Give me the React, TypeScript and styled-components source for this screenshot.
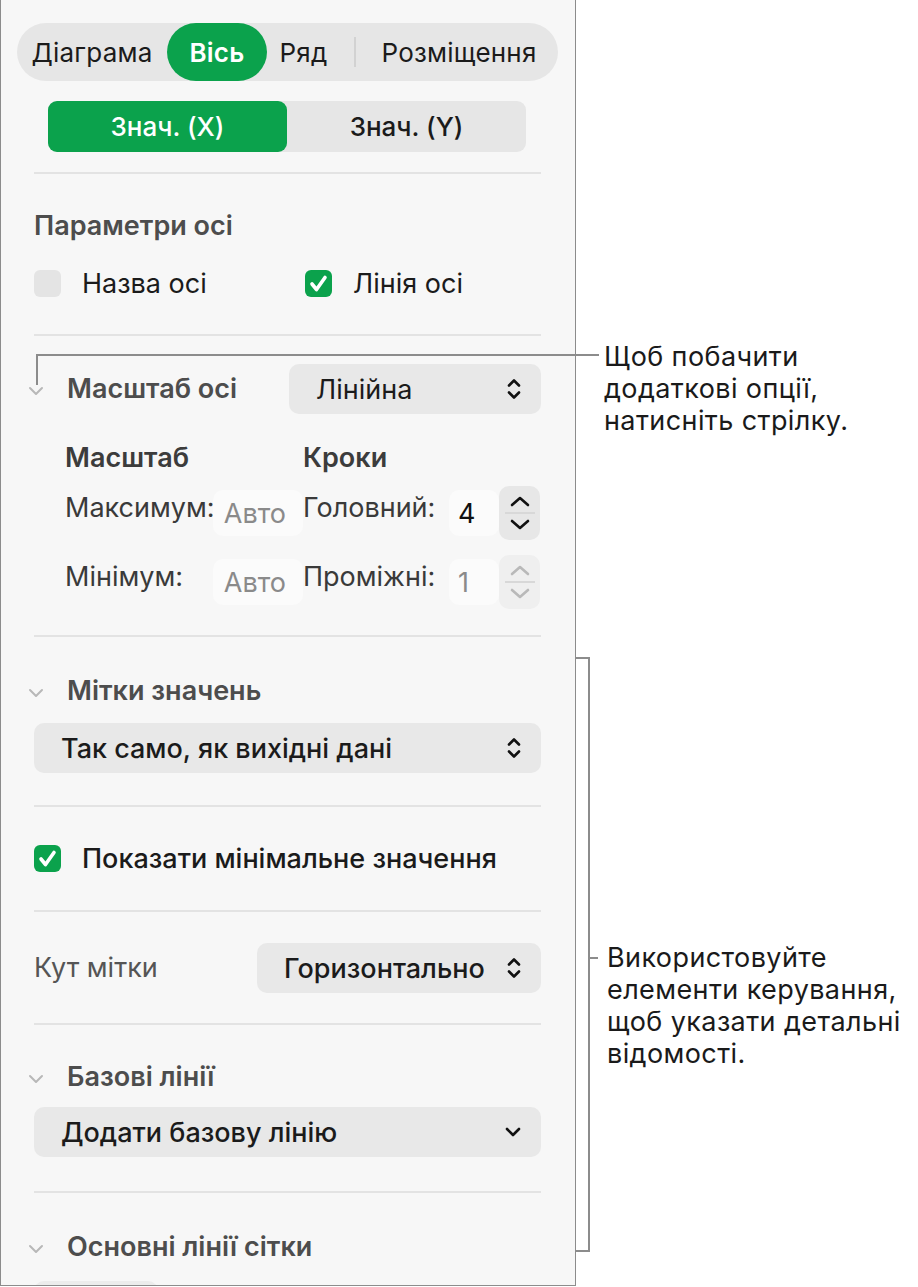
import React from 'react';
import styled, { createGlobalStyle } from 'styled-components';

const GREEN = '#0ba24c';
const LINE = '#8c8c8c';

const GlobalStyle = createGlobalStyle`
  html, body { margin: 0; padding: 0; background: #ffffff; }
  body {
    font-family: Inter, "Noto Sans", "Liberation Sans", sans-serif;
    -webkit-font-smoothing: antialiased;
  }
`;

const Figure = styled.div`
    position: relative;
    display: flex;
    align-items: flex-start;
    width: 918px;
    height: 1287px;
    overflow: hidden;
`;

const Panel = styled.aside`
    box-sizing: border-box;
    width: 576px;
    height: 1286px;
    flex-shrink: 0;
    padding: 23px 34px 0 33px;
    background: #f7f7f7;
    border: 1px solid ${LINE};
    border-top: none;
    overflow: hidden;
    display: flex;
    flex-direction: column;

    & > * {
        flex-shrink: 0;
    }
`;

const TabBar = styled.div`
    display: flex;
    align-items: center;
    height: 58px;
    margin: 0 -17px;
    background: #e6e6e6;
    border-radius: 29px;
`;

const Tab = styled.div<{ $w: number; $active?: boolean }>`
    width: ${(p) => p.$w}px;
    height: 58px;
    display: flex;
    align-items: center;
    justify-content: center;
    border-radius: 29px;
    font-size: 26px;
    letter-spacing: 0.2px;
    font-weight: ${(p) => (p.$active ? 600 : 400)};
    color: ${(p) => (p.$active ? '#ffffff' : '#1b1b1b')};
    background: ${(p) => (p.$active ? GREEN : 'transparent')};
`;

const TabSep = styled.div`
    width: 2px;
    height: 30px;
    margin: 0 14px;
    background: #d2d2d2;
`;

const Segmented = styled.div`
    display: grid;
    grid-template-columns: 1fr 1fr;
    height: 51px;
    margin: 20px 15px 0 14px;
    background: #e6e6e6;
    border-radius: 9px;
`;

const Segment = styled.div<{ $active?: boolean }>`
    display: flex;
    align-items: center;
    justify-content: center;
    border-radius: 9px;
    font-size: 26px;
    font-weight: 500;
    color: ${(p) => (p.$active ? '#ffffff' : '#1b1b1b')};
    background: ${(p) => (p.$active ? GREEN : 'transparent')};
`;

const Divider = styled.div<{ $mt: number }>`
    height: 2px;
    margin-top: ${(p) => p.$mt}px;
    background: #e3e3e3;
`;

const SectionTitle = styled.div<{ $mt: number }>`
    margin-top: ${(p) => p.$mt}px;
    font-size: 27px;
    line-height: 28px;
    font-weight: 600;
    color: #4d4d4d;
`;

const CheckRow = styled.div<{ $mt: number }>`
    display: flex;
    align-items: center;
    height: 27px;
    margin-top: ${(p) => p.$mt}px;
`;

const CheckItem = styled.label<{ $w?: number }>`
    display: flex;
    align-items: center;
    gap: 21px;
    width: ${(p) => (p.$w ? `${p.$w}px` : 'auto')};
`;

const Box = styled.span<{ $on?: boolean }>`
    width: 27px;
    height: 27px;
    border-radius: 6px;
    background: ${(p) => (p.$on ? GREEN : '#e4e4e4')};
    display: flex;
    align-items: center;
    justify-content: center;
    flex-shrink: 0;
`;

const Label = styled.span<{ $weight?: number; $color?: string }>`
    font-size: 27px;
    line-height: 28px;
    font-weight: ${(p) => p.$weight ?? 400};
    color: ${(p) => p.$color ?? '#1b1b1b'};
    white-space: nowrap;
`;

const HeaderRow = styled.div<{ $mt: number }>`
    display: flex;
    align-items: center;
    justify-content: space-between;
    margin-top: ${(p) => p.$mt}px;
`;

const Disclosure = styled.div`
    display: flex;
    align-items: center;
    margin-left: -6px;
`;

const ChevronSlot = styled.span`
    width: 39px;
    display: flex;
    align-items: center;
    padding-top: 4px;
`;

const Popup = styled.div<{ $w?: number; $mt?: number }>`
    box-sizing: border-box;
    width: ${(p) => (p.$w ? `${p.$w}px` : '100%')};
    height: 50px;
    margin-top: ${(p) => p.$mt ?? 0}px;
    padding: 0 19px 0 27px;
    display: flex;
    align-items: center;
    justify-content: space-between;
    background: #e8e8e8;
    border-radius: 10px;
    flex-shrink: 0;
`;

const PopupText = styled.span<{ $weight?: number }>`
    font-size: 27px;
    font-weight: ${(p) => p.$weight ?? 500};
    color: #1b1b1b;
    white-space: nowrap;
`;

const ScaleGrid = styled.div`
    display: grid;
    grid-template-columns: 148px 90px 146px 50px 41px;
    align-items: center;
    margin-left: 31px;
`;

const SubHead = styled.div<{ $span: number }>`
    grid-column: span ${(p) => p.$span};
    margin-top: 30px;
    margin-bottom: 14px;
    font-size: 27px;
    line-height: 28px;
    font-weight: 600;
    color: #3c3c3c;
`;

const FieldLabel = styled.div`
    font-size: 27px;
    color: #3a3a3a;
    padding-bottom: 12px;
    white-space: nowrap;
`;

const Field = styled.div<{ $dim?: boolean; $start?: boolean }>`
    height: 46px;
    display: flex;
    align-items: center;
    justify-content: ${(p) => (p.$start ? 'flex-start' : 'flex-end')};
    padding: ${(p) => (p.$start ? '0 0 0 9px' : '0 17px 0 0')};
    border-radius: 10px;
    background: #fbfbfb;
    font-size: 27px;
    color: ${(p) => (p.$dim ? '#8a8a8a' : '#111111')};
`;

const Stepper = styled.div<{ $disabled?: boolean }>`
    width: 41px;
    height: 54px;
    border-radius: 10px;
    background: ${(p) => (p.$disabled ? '#efefef' : '#e7e7e7')};
    display: flex;
    flex-direction: column;
    align-items: center;
    justify-content: center;
    gap: 5px;
    color: ${(p) => (p.$disabled ? '#b9b9b9' : '#111111')};
`;

const StepSep = styled.span`
    width: 30px;
    height: 2px;
    background: #d8d8d8;
`;

const Spacer = styled.div<{ $h: number }>`
    grid-column: 1 / -1;
    height: ${(p) => p.$h}px;
`;

const Stub = styled.div<{ $w: number; $mt: number }>`
    width: ${(p) => p.$w}px;
    height: 40px;
    margin-top: ${(p) => p.$mt}px;
    border-radius: 10px;
    background: #ececec;
`;

/* callouts to the right of the panel */

const Notes = styled.div`
    display: flex;
    flex-direction: column;
    margin-left: -1px;
`;

const Note = styled.div<{ $mt?: number; $ml?: number }>`
    margin-top: ${(p) => p.$mt ?? 0}px;
    margin-left: ${(p) => p.$ml ?? 0}px;
    font-size: 27px;
    letter-spacing: 0.4px;
    line-height: 32px;
    color: #1a1a1a;
    white-space: nowrap;
`;

const BracketRow = styled.div`
    display: flex;
    align-items: flex-start;
    margin-top: 220px;
`;

const Bracket = styled.div`
    box-sizing: border-box;
    width: 15px;
    height: 595px;
    border: 2px solid ${LINE};
    border-left: none;
    flex-shrink: 0;
`;

const TickNote = styled.div`
    display: flex;
    align-items: flex-start;
    margin-top: 285px;
`;

const Tick = styled.span`
    width: 8px;
    height: 2px;
    margin-top: 15px;
    margin-right: 9px;
    background: ${LINE};
`;

const Leader = styled.div`
    position: absolute;
    left: 36px;
    top: 354px;
    width: 561px;
    height: 29px;
    border-top: 2px solid ${LINE};
    border-left: 2px solid ${LINE};
    pointer-events: none;
`;

const Chevron = ({ color = '#b8b8b8' }: { color?: string }) => (
    <svg width="16" height="10" viewBox="0 0 16 10">
        <path d="M2 2 L8 8 L14 2" fill="none" stroke={color} strokeWidth="2" strokeLinecap="round" strokeLinejoin="round" />
    </svg>
);

const UpDown = () => (
    <svg width="16" height="26" viewBox="0 0 16 26">
        <path d="M3 9.5 L8 4.5 L13 9.5 M3 16.5 L8 21.5 L13 16.5" fill="none" stroke="#111" strokeWidth="2.6" strokeLinecap="round" strokeLinejoin="round" />
    </svg>
);

const DownArrow = () => (
    <svg width="18" height="12" viewBox="0 0 18 12">
        <path d="M3 3 L9 9 L15 3" fill="none" stroke="#111" strokeWidth="2.6" strokeLinecap="round" strokeLinejoin="round" />
    </svg>
);

const StepUp = () => (
    <svg width="22" height="12" viewBox="0 0 22 12">
        <path d="M3 10 L11 3 L19 10" fill="none" stroke="currentColor" strokeWidth="2.6" strokeLinecap="round" strokeLinejoin="round" />
    </svg>
);

const StepDown = () => (
    <svg width="22" height="12" viewBox="0 0 22 12">
        <path d="M3 2 L11 9 L19 2" fill="none" stroke="currentColor" strokeWidth="2.6" strokeLinecap="round" strokeLinejoin="round" />
    </svg>
);

const Check = () => (
    <svg width="27" height="27" viewBox="0 0 27 27">
        <path d="M7 14 L11.5 19.5 L20 7.5" fill="none" stroke="#fff" strokeWidth="3.6" strokeLinecap="round" strokeLinejoin="round" />
    </svg>
);

const DisclosureTitle: React.FC<{ text: string }> = ({ text }) => (
    <Disclosure>
        <ChevronSlot>
            <Chevron />
        </ChevronSlot>
        <Label $weight={600} $color="#4d4d4d">
            {text}
        </Label>
    </Disclosure>
);

const StepperControl: React.FC<{ disabled?: boolean }> = ({ disabled }) => (
    <Stepper $disabled={disabled}>
        <StepUp />
        <StepSep />
        <StepDown />
    </Stepper>
);

export default function App() {
    return (
        <Figure>
            <GlobalStyle />
            <Panel>
                <TabBar>
                    <Tab $w={150}>Діаграма</Tab>
                    <Tab $w={100} $active>
                        Вісь
                    </Tab>
                    <Tab $w={73}>Ряд</Tab>
                    <TabSep />
                    <Tab $w={178}>Розміщення</Tab>
                </TabBar>

                <Segmented>
                    <Segment $active>Знач. (X)</Segment>
                    <Segment>Знач. (Y)</Segment>
                </Segmented>

                <Divider $mt={20} />

                <SectionTitle $mt={38}>Параметри осі</SectionTitle>
                <CheckRow $mt={30}>
                    <CheckItem $w={271}>
                        <Box />
                        <Label>Назва осі</Label>
                    </CheckItem>
                    <CheckItem>
                        <Box $on>
                            <Check />
                        </Box>
                        <Label>Лінія осі</Label>
                    </CheckItem>
                </CheckRow>

                <Divider $mt={37} />

                <HeaderRow $mt={28}>
                    <DisclosureTitle text="Масштаб осі" />
                    <Popup $w={252}>
                        <PopupText $weight={400}>Лінійна</PopupText>
                        <UpDown />
                    </Popup>
                </HeaderRow>

                <ScaleGrid>
                    <SubHead $span={2}>Масштаб</SubHead>
                    <SubHead $span={3}>Кроки</SubHead>

                    <FieldLabel>Максимум:</FieldLabel>
                    <Field $dim>Авто</Field>
                    <FieldLabel>Головний:</FieldLabel>
                    <Field $start>4</Field>
                    <StepperControl />

                    <Spacer $h={15} />

                    <FieldLabel>Мінімум:</FieldLabel>
                    <Field $dim>Авто</Field>
                    <FieldLabel>Проміжні:</FieldLabel>
                    <Field $dim $start>
                        1
                    </Field>
                    <StepperControl disabled />
                </ScaleGrid>

                <Divider $mt={26} />

                <HeaderRow $mt={40}>
                    <DisclosureTitle text="Мітки значень" />
                </HeaderRow>
                <Popup $mt={18}>
                    <PopupText>Так само, як вихідні дані</PopupText>
                    <UpDown />
                </Popup>

                <Divider $mt={32} />

                <CheckRow $mt={38}>
                    <CheckItem>
                        <Box $on>
                            <Check />
                        </Box>
                        <Label $weight={500}>Показати мінімальне значення</Label>
                    </CheckItem>
                </CheckRow>

                <Divider $mt={38} />

                <HeaderRow $mt={31}>
                    <Label $color="#555555">Кут мітки</Label>
                    <Popup $w={284}>
                        <PopupText>Горизонтально</PopupText>
                        <UpDown />
                    </Popup>
                </HeaderRow>

                <Divider $mt={30} />

                <HeaderRow $mt={38}>
                    <DisclosureTitle text="Базові лінії" />
                </HeaderRow>
                <Popup $mt={16}>
                    <PopupText>Додати базову лінію</PopupText>
                    <DownArrow />
                </Popup>

                <Divider $mt={34} />

                <HeaderRow $mt={40}>
                    <DisclosureTitle text="Основні лінії сітки" />
                </HeaderRow>
                <Stub $w={124} $mt={20} />
            </Panel>

            <Notes>
                <Note $mt={341} $ml={29}>
                    Щоб побачити
                    <br />
                    додаткові опції,
                    <br />
                    натисніть стрілку.
                </Note>
                <BracketRow>
                    <Bracket />
                    <TickNote>
                        <Tick />
                        <Note>
                            Використовуйте
                            <br />
                            елементи керування,
                            <br />
                            щоб указати детальні
                            <br />
                            відомості.
                        </Note>
                    </TickNote>
                </BracketRow>
            </Notes>

            <Leader />
        </Figure>
    );
}
